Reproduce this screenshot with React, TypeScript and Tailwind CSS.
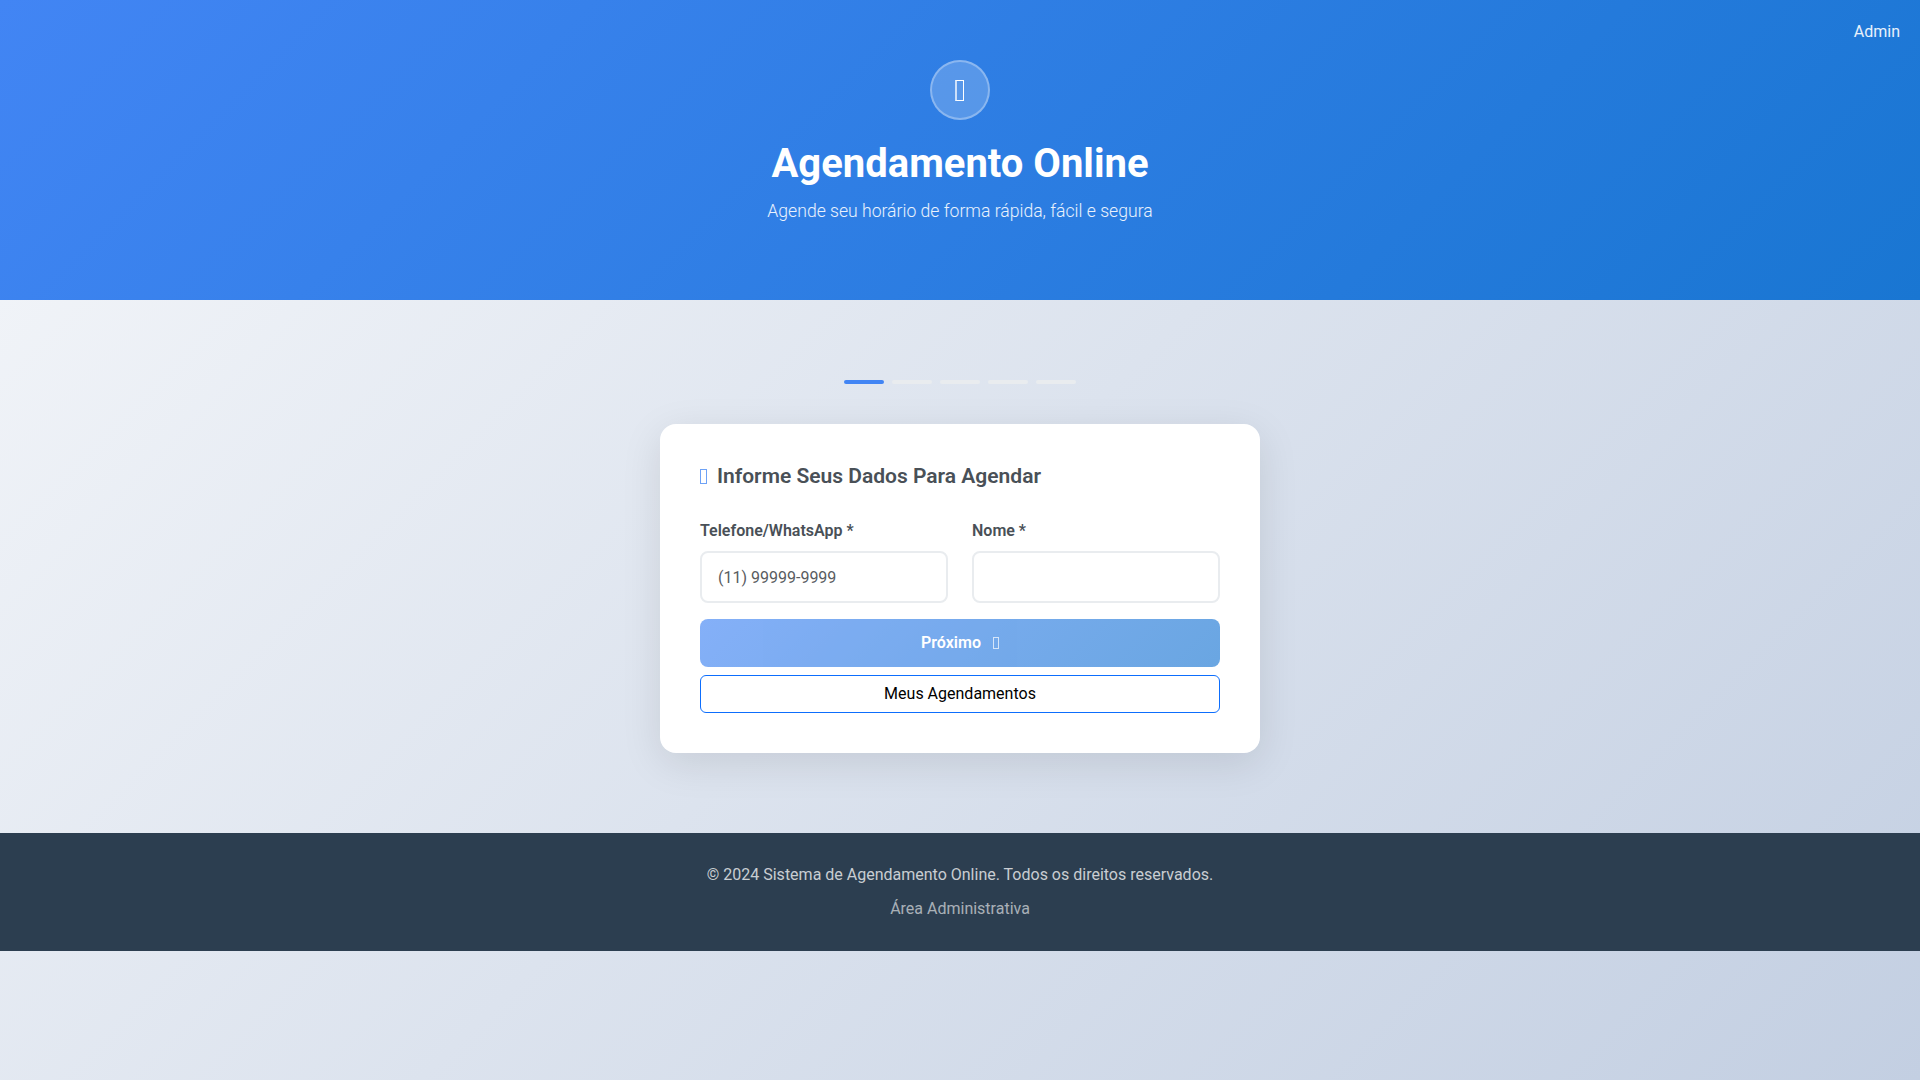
export default function App() {
    const steps = [true, false, false, false, false];

    return (
        <div className="min-h-screen bg-[linear-gradient(135deg,#f5f7fa_0%,#c3cfe2_100%)] font-['Roboto',sans-serif] text-[16px] text-[#333]">
            <header className="relative h-[300px] bg-[linear-gradient(135deg,#4285f4_0%,#1976d2_100%)] pt-[60px] text-center text-white">
                <a className="absolute right-5 top-5 text-white/90">Admin</a>
                <div className="mx-auto mb-5 flex h-[60px] w-[60px] items-center justify-center rounded-full border-2 border-white/30 bg-white/20">
                    {/* icon font never loaded in the original, it shows an empty box */}
                    <span className="mr-px h-[21px] w-[9px] border border-l-2 border-white border-l-white/70" />
                </div>
                <h1 className="mb-2.5 text-[40px] font-bold leading-[1.2]">Agendamento Online</h1>
                <p className="text-[17.6px] font-light text-white/90">Agende seu horário de forma rápida, fácil e segura</p>
            </header>

            <main className="px-5 py-20">
                <div className="mb-10 flex justify-center gap-2">
                    {steps.map((active, i) => (
                        <div key={i} className={`h-1 w-10 rounded-sm ${active ? 'bg-[#4285f4]' : 'bg-[#e9ecef]'}`} />
                    ))}
                </div>

                <div className="mx-auto w-[600px] rounded-2xl bg-white p-10 shadow-[0_10px_40px_rgba(0,0,0,0.1)]">
                    <h2 className="mb-[30px] flex items-center gap-2.5 text-[21px] font-semibold leading-[25px] text-[#495057]">
                        <span className="h-[15px] w-[7px] border border-[#6ea2f6]" />
                        Informe Seus Dados Para Agendar
                    </h2>

                    <div className="mb-4 grid grid-cols-2 gap-6">
                        <div>
                            <label className="mb-2 block font-semibold text-[#495057]">Telefone/WhatsApp *</label>
                            <input
                                className="h-[52px] w-full rounded-lg border-2 border-[#e9ecef] bg-white px-4 text-[16px] text-[#495057] outline-none placeholder:text-[#595c5f]"
                                placeholder="(11) 99999-9999"
                            />
                        </div>
                        <div>
                            <label className="mb-2 block font-semibold text-[#495057]">Nome *</label>
                            <input className="h-[52px] w-full rounded-lg border-2 border-[#e9ecef] bg-white px-4 text-[16px] text-[#495057] outline-none" />
                        </div>
                    </div>

                    <button className="mb-2 flex h-12 w-full items-center justify-center gap-3 rounded-lg bg-[linear-gradient(135deg,#4285f4_0%,#1976d2_100%)] font-semibold text-white opacity-65">
                        Próximo
                        <span className="h-3 w-1.5 border border-white/70" />
                    </button>
                    <button className="h-[38px] w-full rounded-md border border-[#0d6efd] bg-white text-black">Meus Agendamentos</button>
                </div>
            </main>

            <footer className="bg-[#2c3e50] py-[30px] text-center text-white/75">
                <p className="mb-2.5">© 2024 Sistema de Agendamento Online. Todos os direitos reservados.</p>
                <a className="text-white/60">Área Administrativa</a>
            </footer>
        </div>
    );
}
